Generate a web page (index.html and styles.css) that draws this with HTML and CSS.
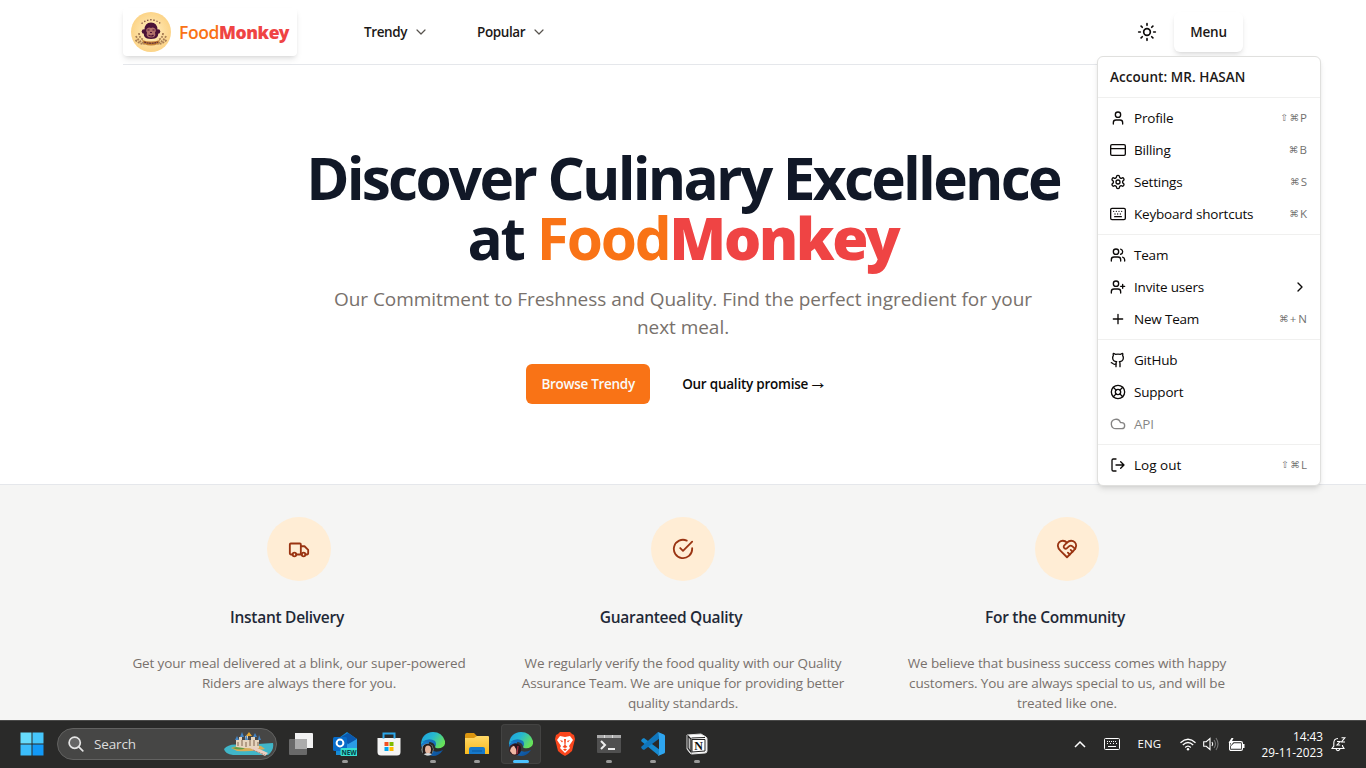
FILE: index.html
```html
<!DOCTYPE html>
<html lang="en">
<head>
<meta charset="utf-8">
<title>FoodMonkey</title>
<link rel="stylesheet" href="styles.css">
</head>
<body>
<main class="page">
  <div class="hero-wrap">
    <header class="header">
      <a class="brand">
        <svg class="brand-logo" viewBox="0 0 40 40">
          <defs><radialGradient id="cream"><stop offset="0" stop-color="#fff0c4"/><stop offset="1" stop-color="#fcd488"/></radialGradient></defs>
          <circle cx="20" cy="20" r="20" fill="url(#cream)"/>
          <path d="M10.500 11.500q9.500-7.500 19 0" fill="none" stroke="#7a4a3c" stroke-width="1.300" stroke-dasharray="1.300 1.900"/>
          <path d="M5 24q2 5 8 7M8 21q0 5 5 7M35 24q-2 5-8 7M32 21q0 5-5 7M4.500 28q4 4 9 4M35.500 28q-4 4-9 4" fill="none" stroke="#a97f55" stroke-width="1.800" stroke-dasharray="2 1"/>
          <circle cx="13" cy="19.500" r="2.300" fill="#4a1237"/><circle cx="27" cy="19.500" r="2.300" fill="#4a1237"/>
          <path d="M13.500 18q0-7.500 6.500-7.500t6.500 7.500q3 9-6.500 9t-6.500-9z" fill="#4a1237"/>
          <path d="M15.500 17q2-2.500 4.500-1 2.500-1.500 4.500 1 1 2.500-.5 3.500 1.500 5-4 5t-4-5q-1.500-1-.5-3.500z" fill="#b0706a"/>
          <path d="M16.500 18h2M21.500 18h2M19 20.500h2M17.500 23q3 2 5 0" stroke="#4a1237" stroke-width="1.200" fill="none"/>
          <path d="M11 28q9 3 18 0l-2 4q-7 3-14 0z" fill="#c48236"/>
          <path d="M13 30q7 2.500 14 0" stroke="#5a2639" stroke-width="1.200" fill="none" stroke-dasharray="2 .6"/>
        </svg>
        <span class="brand-name"><span class="food">Food</span><span class="monkey">Monkey</span></span>
      </a>
      <nav class="nav">
        <a class="nav-item"><span>Trendy</span><svg class="icon chevron" viewBox="0 0 24 24"><path d="m6 9 6 6 6-6"/></svg></a>
        <a class="nav-item"><span>Popular</span><svg class="icon chevron" viewBox="0 0 24 24"><path d="m6 9 6 6 6-6"/></svg></a>
      </nav>
      <div class="header-actions">
        <svg class="icon sun" viewBox="0 0 24 24"><circle cx="12" cy="12" r="4"/><path d="M12 2v2M12 20v2M4.930 4.930l1.410 1.410M17.660 17.660l1.410 1.410M2 12h2M20 12h2M6.340 17.660l-1.410 1.410M19.070 4.930l-1.410 1.410"/></svg>
        <button class="menu-button">Menu</button>
      </div>
      <div class="dropdown">
        <div class="menu-label">Account: MR. HASAN</div>
        <hr class="menu-sep">
        <div class="menu-item"><svg class="icon" viewBox="0 0 24 24"><path d="M19 21v-2a4 4 0 0 0-4-4H9a4 4 0 0 0-4 4v2"/><circle cx="12" cy="7" r="4"/></svg><span>Profile</span><span class="keys"><i class="shift">⇧</i><i>⌘</i>P</span></div>
        <div class="menu-item"><svg class="icon" viewBox="0 0 24 24"><rect width="22" height="16" x="1" y="4" rx="2"/><path d="M1 10h22"/></svg><span>Billing</span><span class="keys"><i>⌘</i>B</span></div>
        <div class="menu-item"><svg class="icon" viewBox="0 0 24 24"><path d="M12.220 2h-.44a2 2 0 0 0-2 2v.18a2 2 0 0 1-1 1.730l-.43.25a2 2 0 0 1-2 0l-.15-.08a2 2 0 0 0-2.730.73l-.22.38a2 2 0 0 0 .73 2.730l.15.1a2 2 0 0 1 1 1.720v.51a2 2 0 0 1-1 1.740l-.15.09a2 2 0 0 0-.73 2.730l.22.38a2 2 0 0 0 2.730.73l.15-.08a2 2 0 0 1 2 0l.43.25a2 2 0 0 1 1 1.730V20a2 2 0 0 0 2 2h.44a2 2 0 0 0 2-2v-.18a2 2 0 0 1 1-1.730l.43-.25a2 2 0 0 1 2 0l.15.08a2 2 0 0 0 2.730-.73l.22-.39a2 2 0 0 0-.73-2.730l-.15-.08a2 2 0 0 1-1-1.740v-.5a2 2 0 0 1 1-1.740l.15-.09a2 2 0 0 0 .73-2.730l-.22-.38a2 2 0 0 0-2.730-.73l-.15.08a2 2 0 0 1-2 0l-.43-.25a2 2 0 0 1-1-1.730V4a2 2 0 0 0-2-2z"/><circle cx="12" cy="12" r="3"/></svg><span>Settings</span><span class="keys"><i>⌘</i>S</span></div>
        <div class="menu-item"><svg class="icon" viewBox="0 0 24 24"><rect width="22" height="17" x="1" y="3.500" rx="2"/><path d="M5.500 8h.01M9.500 8h.01M13.500 8h.01M17.500 8h.01M7.500 12h.01M11.500 12h.01M15.500 12h.01M7 16h10"/></svg><span>Keyboard shortcuts</span><span class="keys"><i>⌘</i>K</span></div>
        <hr class="menu-sep">
        <div class="menu-item"><svg class="icon" viewBox="0 0 24 24"><path d="M16 21v-2a4 4 0 0 0-4-4H6a4 4 0 0 0-4 4v2"/><circle cx="9" cy="7" r="4"/><path d="M22 21v-2a4 4 0 0 0-3-3.870M16 3.130a4 4 0 0 1 0 7.750"/></svg><span>Team</span></div>
        <div class="menu-item"><svg class="icon" viewBox="0 0 24 24"><path d="M16 21v-2a4 4 0 0 0-4-4H6a4 4 0 0 0-4 4v2"/><circle cx="9" cy="7" r="4"/><path d="M19 8v6M22 11h-6"/></svg><span>Invite users</span><svg class="icon submenu" viewBox="0 0 24 24"><path d="m9 18 6-6-6-6"/></svg></div>
        <div class="menu-item"><svg class="icon" viewBox="0 0 24 24"><path d="M5 12h14M12 5v14"/></svg><span>New Team</span><span class="keys wide"><i>⌘</i>+N</span></div>
        <hr class="menu-sep">
        <div class="menu-item"><svg class="icon" viewBox="0 0 24 24"><path d="M15 22v-4a4.800 4.800 0 0 0-1-3.500c3 0 6-2 6-5.500.08-1.250-.27-2.480-1-3.500.28-1.150.28-2.350 0-3.500 0 0-1 0-3 1.500-2.640-.5-5.360-.5-8 0C6 2 5 2 5 2c-.3 1.150-.3 2.350 0 3.500A5.403 5.403 0 0 0 4 9c0 3.500 3 5.500 6 5.500-.39.49-.68 1.050-.85 1.650-.17.6-.22 1.230-.15 1.850v4"/><path d="M9 18c-4.510 2-5-2-7-2"/></svg><span>GitHub</span></div>
        <div class="menu-item"><svg class="icon" viewBox="0 0 24 24"><circle cx="12" cy="12" r="10"/><path d="m4.930 4.930 4.240 4.240M14.830 9.170l4.240-4.240M14.830 14.830l4.240 4.240M9.170 14.830l-4.240 4.240"/><circle cx="12" cy="12" r="4"/></svg><span>Support</span></div>
        <div class="menu-item disabled"><svg class="icon" viewBox="0 0 24 24"><path d="M17.500 19H9a7 7 0 1 1 6.710-9h1.790a4.500 4.500 0 1 1 0 9Z"/></svg><span>API</span></div>
        <hr class="menu-sep">
        <div class="menu-item"><svg class="icon" viewBox="0 0 24 24"><path d="M9 21H5a2 2 0 0 1-2-2V5a2 2 0 0 1 2-2h4M16 17l5-5-5-5M21 12H9"/></svg><span class="logout">Log out</span><span class="keys"><i class="shift">⇧</i><i>⌘</i>L</span></div>
      </div>
    </header>
    <section class="hero">
      <h1><span class="line-one">Discover Culinary Excellence</span><br>at <span class="food">Food</span><span class="monkey">Monkey</span></h1>
      <p>Our Commitment to Freshness and Quality. Find the perfect ingredient for your<br>next meal.</p>
      <div class="cta">
        <a class="btn primary">Browse Trendy</a>
        <a class="btn ghost">Our quality promise <span class="arrow">→</span></a>
      </div>
    </section>
  </div>
  <section class="perks">
    <div class="perk-grid">
      <article class="perk">
        <div class="perk-icon"><svg class="icon" viewBox="0 0 24 24"><path d="M5 18H3c-.6 0-1-.4-1-1V7c0-.6.4-1 1-1h10c.6 0 1 .4 1 1v11M14 9h4l4 4v4c0 .6-.4 1-1 1h-2M15 18H9"/><circle cx="7" cy="18" r="2"/><circle cx="17" cy="18" r="2"/></svg></div>
        <h3>Instant Delivery</h3>
        <p>Get your meal delivered at a blink, our super-powered<br>Riders are always there for you.</p>
      </article>
      <article class="perk">
        <div class="perk-icon"><svg class="icon" viewBox="0 0 24 24"><path d="M22 11.080V12a10 10 0 1 1-5.930-9.140"/><path d="m9 11 3 3L22 4"/></svg></div>
        <h3>Guaranteed Quality</h3>
        <p>We regularly verify the food quality with our Quality<br>Assurance Team. We are unique for providing better<br>quality standards.</p>
      </article>
      <article class="perk">
        <div class="perk-icon"><svg class="icon" viewBox="0 0 24 24"><path d="M19 14c1.490-1.460 3-3.210 3-5.500A5.500 5.500 0 0 0 16.500 3c-1.760 0-3 .5-4.500 2-1.500-1.500-2.740-2-4.500-2A5.500 5.500 0 0 0 2 8.500c0 2.300 1.500 4.050 3 5.500l7 7Z"/><path d="M12 5 9.040 7.960a2.170 2.170 0 0 0 0 3.080c.82.82 2.130.85 3 .07l2.070-1.900a2.820 2.820 0 0 1 3.790 0l2.960 2.660M18 15l-2-2M15 18l-2-2"/></svg></div>
        <h3>For the Community</h3>
        <p>We believe that business success comes with happy<br>customers. You are always special to us, and will be<br>treated like one.</p>
      </article>
    </div>
  </section>
</main>

<footer class="taskbar">
  <svg width="0" height="0" class="defs">
    <defs>
      <linearGradient id="edgeTop" x1="0" y1="0" x2="1" y2=".5"><stop offset="0" stop-color="#1b9de2"/><stop offset=".5" stop-color="#27b9cf"/><stop offset="1" stop-color="#66e05a"/></linearGradient>
      <linearGradient id="edgeLow" x1="0" y1="0" x2="1" y2="1"><stop offset="0" stop-color="#1a86d8"/><stop offset="1" stop-color="#0c4a92"/></linearGradient>
      <linearGradient id="folder" x1="0" y1="0" x2="0" y2="1"><stop offset="0" stop-color="#ffd968"/><stop offset="1" stop-color="#f9b91c"/></linearGradient>
      <symbol id="edge" viewBox="0 0 24 24">
        <path d="M0 13C0 5 5 0 12 0q9 0 12 9c1 6-4 8-9 7-2-1 0-2-1-5Q12 8 8 9 2 10 0 13z" fill="url(#edgeTop)"/>
        <path d="M0 13q4-6 9-4-3 4 0 8 5 5 13 1-4 6-10 6Q2 24 0 13z" fill="url(#edgeLow)"/>
        <path d="M1 10q7-5 13-1 2 3 0 6 0-4-5-5-4-1-8 0z" fill="#1672bd"/>
      </symbol>
    </defs>
  </svg>
  <div class="task"><svg width="24" height="24" viewBox="0 0 24 24"><path d="M.5.500h11v11H.5z" fill="#67dcfc"/><path d="M12.500.500h11v11h-11z" fill="#46c6fb"/><path d="M.5 12.500h11v11H.5z" fill="#3bbdfb"/><path d="M12.500 12.500h11v11h-11z" fill="#1299f7"/></svg></div>
  <div class="search">
    <svg width="16" height="16" viewBox="0 0 16 16" fill="none" stroke="#e5e5e5" stroke-width="1.700"><circle cx="6.700" cy="6.700" r="5.600" fill="#666"/><path d="m10.800 10.800 4 4" stroke-linecap="round"/></svg>
    <span>Search</span>
    <svg class="castle" width="50" height="26" viewBox="0 0 50 26">
      <path d="M0 18Q5 12 16 14l33-2c1 5-1 9-5 12H9Q1 23 0 18z" fill="#40b6c8"/>
      <path d="M7 17q10-4 30-2l4 3q-12 3-28 2z" fill="#d7ad57"/>
      <path d="M8 17q10-3 13 0-4 3-13 0z" fill="#5f9c46"/>
      <path d="M12 16V9h3V6h3v3h3V5h3v4h3V6h4v3h4v8q-12 1-23-1z" fill="#e6d5be"/>
      <path d="m11 9 2-4 2 4zM16 6l2-5 2 5zM21 9l1-6 2 6zM29 6l2-4 2 4zM34 9l1-5 2 5z" fill="#4385c5"/>
      <path d="m22 5 3-4 3 4z" fill="#e8a62c"/>
      <path d="M14 11v4M18 9v6M22 11v5M26 9v6M30 9v6M34 11v4" stroke="#80654f"/>
      <path d="m26 17 5-1 13 6-3 3z" fill="#e9cfc3"/><path d="m29 19 12 5" stroke="#a98477" stroke-dasharray="2 1"/>
    </svg>
  </div>
  <div class="task"><svg width="24" height="24" viewBox="0 0 24 24"><path d="M6 1h17a1 1 0 0 1 1 1v14H6z" fill="#f1f1f1"/><rect y="7" width="18" height="16" rx="1" fill="#696969"/><path d="M6 7h12v10H6z" fill="#ababab"/></svg></div>
  <div class="task running"><svg width="24" height="24" viewBox="0 0 24 24"><path d="M3 8 14 0l10 7v16H3z" fill="#168bd6"/><path d="m8 5 7-4 9 6-8 6z" fill="#0b58ae"/><path d="M10 15 24 7v13H10z" fill="#2a9ce6"/><rect y="5" width="14" height="14" rx="1.500" fill="#086cc9"/><circle cx="7" cy="11" r="3.400" fill="none" stroke="#fff" stroke-width="2"/><rect x="7.500" y="16" width="17" height="8" rx="1" fill="#35e0d0"/><text x="16" y="22.500" text-anchor="middle" class="new-tag">NEW</text></svg></div>
  <div class="task"><svg width="24" height="24" viewBox="0 0 24 24"><path d="M.500 6h23v14a3.500 3.500 0 0 1-3.500 3.500H4A3.500 3.500 0 0 1 .500 20z" fill="#f4f4f4"/><path d="M6.500 6.500v-5h11v5" fill="none" stroke="#2ca6e8" stroke-width="2"/><path d="M7.500 10h4v4h-4z" fill="#f25022"/><path d="M12.500 10h4v4h-4z" fill="#7fba00"/><path d="M7.500 15h4v4h-4z" fill="#00a4ef"/><path d="M12.500 15h4v4h-4z" fill="#ffb900"/></svg></div>
  <div class="task running"><svg width="24" height="24" viewBox="0 0 24 24"><use href="#edge"/><circle cx="6.500" cy="17.500" r="6" fill="#9eb2ae"/><path d="M2 22q-2-9 3-10 6-1 7 5l-1 5z" fill="#241b1b"/><ellipse cx="7" cy="17.500" rx="3" ry="4" fill="#e5b69e"/><path d="M3 22q4-2 8 0-4 3-8 0z" fill="#ddd"/></svg></div>
  <div class="task running"><svg width="24" height="24" viewBox="0 0 24 24"><path d="M0 3q0-2 2-2h7l3 3h11v10H0z" fill="#db950f"/><path d="M0 6h9l3-2h11q1 0 1 1v17H0z" fill="url(#folder)"/><path d="M4 22v-5q0-2 2-2h12q2 0 2 2v5z" fill="#1679cb"/><path d="M7 19h10" stroke="#0b5a9f"/></svg></div>
  <div class="task active"><svg width="24" height="24" viewBox="0 0 24 24"><use href="#edge"/><circle cx="6" cy="17.500" r="6" fill="#3a2023"/><path d="M1 19q1-6 7-5 1 4-1 8-3 2-6-3z" fill="#efb7a4"/><path d="m4 12 3 5 1 6q5-3 4-8-3-5-8-3z" fill="#29131c"/><path d="m9 14-1 8" stroke="#a92e42" stroke-width="1.200"/></svg></div>
  <div class="task"><svg width="20" height="24" viewBox="0 0 20 24"><path d="m5 0h10l2 2 2 1 1 4-3 12q-3 3-7 5-4-2-7-5L0 7l1-4 2-1z" fill="#f9461d"/><path d="m5 4 5 1 5-1 3 4-4 6 1 2-5 5-5-5 1-2-4-6z" fill="#fff"/><path d="m5 8 3 1-1 1.500zM15 8l-3 1 1 1.500zM9 7h2l-.5 6 2 2-2.500 1-2.500-1 2-2zM8 17.500l2-1 2 1-2 1.500z" fill="#f9461d"/></svg></div>
  <div class="task running"><svg width="24" height="20" viewBox="0 0 24 20"><rect y="1" width="24" height="18" rx="1" fill="#505050"/><path d="M0 1h24v3H0z" fill="#aaa"/><path d="M7 1h1v3H7zM15 1h1v3h-1z" fill="#ddd"/><path d="m4 7 4 4-4 4M11 15h7" fill="none" stroke="#eee" stroke-width="2"/></svg></div>
  <div class="task running"><svg width="24" height="24" viewBox="0 0 24 24"><path d="m1 7 2-1 16 12-2 5L0 9z" fill="#168ad0"/><path d="m0 15 17-15 2 6L3 18l-2-1z" fill="#1076bc"/><path d="m17 0 6 2.500q1 .5 1 1.500v16q0 1-1 1.500L17 24l1-5V5z" fill="#2ea5ef"/></svg></div>
  <div class="task running"><svg width="22" height="22" viewBox="0 0 22 22"><path d="m1 2 14-1 5 3q1 .5 1 2v12q0 2-2 2L6 21q-1 0-2-1l-3-4z" fill="#fff" stroke="#ddd"/><path d="m2 3 3 3v13l-3-4zM5.500 5 19 4.500" fill="#bbb" stroke="#222" stroke-width="1.200"/><path d="M6 6.500h13v11.500L6 19z" fill="#fff" stroke="#222"/><text x="12.500" y="16.500" text-anchor="middle" class="notion-letter">N</text></svg></div>
  <div class="tray">
    <svg class="up" width="12" height="8" viewBox="0 0 12 8"><path d="m1 7 5-5 5 5" fill="none" stroke="#fff" stroke-width="1.500"/></svg>
    <svg class="kb" width="16" height="12" viewBox="0 0 16 12" fill="none" stroke="#fff"><rect x=".5" y=".5" width="15" height="11" rx="1"/><path d="M3 3.500h10" stroke-dasharray="1 1"/><path d="M3 5.500h10" stroke-dasharray="1 2"/><path d="M4 8.500h8"/></svg>
    <span class="lang">ENG</span>
    <svg class="wifi" width="16" height="13" viewBox="0 0 16 13" fill="none" stroke="#fff" stroke-width="1.300"><path d="M.5 4.700q7.500-7 15 0M2.800 7q5.200-5 10.400 0M5.200 9.500q2.800-2.700 5.600 0"/><circle cx="8" cy="11.200" r="1.200" fill="#fff" stroke="none"/></svg>
    <svg class="vol" width="16" height="14" viewBox="0 0 16 14" fill="none" stroke="#fff" stroke-width="1.100"><path d="M.7 4.700h2.500L7 1.500v11L3.200 9.300H.7z"/><path d="M9 5q1.500 2 0 4"/><path d="M11 3q3 4 0 8M13 1q4 6 0 12" stroke="#777"/></svg>
    <svg class="battery" width="17" height="13" viewBox="0 0 17 13"><rect x="1.600" y="3.600" width="12.800" height="8.800" rx="1.500" fill="none" stroke="#fff" stroke-width="1.200"/><path d="M6 5.200h7v5.600H3V8zM15 6h1.500v4H15z" fill="#fff"/><path d="m3.500 0-3 5H3L2 8.500 6 3.500H3.800L5.500 0z" fill="#fff"/></svg>
    <div class="clock"><span>14:43</span><span class="date">29-11-2023</span></div>
    <svg class="bell" width="15" height="15" viewBox="0 0 15 15" fill="none" stroke="#fff" stroke-width="1.100"><path d="M7 1.500Q2.800 1.700 2.800 6v3L1 11.500h12L11.500 9V8M5 12q1.800 3.500 4 0M6 4.500h3L6 8h3.200M10.500.700H14L10.500 5H14"/></svg>
  </div>
</footer>
</body>
</html>
```
FILE: styles.css
```css
* { box-sizing: border-box; }
body {
  margin: 0;
  width: 1366px;
  height: 768px;
  overflow: hidden;
  display: flex;
  flex-direction: column;
  font-family: "Open Sans", "Noto Sans", sans-serif;
  font-size: 13.5px;
  line-height: 20px;
  color: #0c0a09;
  background: #fff;
}
h1, h3, p, hr { margin: 0; }
i { font-style: normal; }
.page { height: 720px; overflow: hidden; }
.icon {
  width: 16px;
  height: 16px;
  flex: none;
  fill: none;
  stroke: currentColor;
  stroke-width: 2;
  stroke-linecap: round;
  stroke-linejoin: round;
}
.hero-wrap { height: 484px; }
.header {
  position: relative;
  width: 1120px;
  height: 65px;
  margin: 0 auto;
  border-bottom: 1px solid #e5e7eb;
  display: flex;
  align-items: center;
}
.brand {
  width: 174px;
  height: 48px;
  padding: 4px 8px;
  border-radius: 4px;
  box-shadow: 0 4px 6px -1px #0000001a, 0 2px 4px -2px #0000001a;
  display: flex;
  align-items: center;
  gap: 8px;
}
.brand-logo { width: 40px; height: 40px; flex: none; }
.brand-name { font-size: 17.5px; line-height: 28px; font-weight: 600; white-space: nowrap; letter-spacing: -.4px; }
.food { color: #f97316; }
.monkey { color: #ef4444; font-family: "Noto Sans", "Open Sans", sans-serif; font-weight: 900; }
.nav { display: flex; margin-left: 67px; gap: 48px; font-weight: 600; letter-spacing: -.4px; color: #1c1917; }
.nav-item { display: flex; align-items: center; gap: 6px; }
.chevron { color: #57534e; stroke-width: 1.8; }
.header-actions { margin-left: auto; display: flex; align-items: center; gap: 17px; }
.sun { width: 20px; height: 20px; }
.menu-button {
  width: 69px;
  height: 40px;
  border: 0;
  border-radius: 6px;
  background: #fff;
  font: 600 13.5px/20px "Open Sans", sans-serif;
  letter-spacing: -.2px;
  color: #1c1917;
  box-shadow: 0 4px 6px -1px #0000001a, 0 2px 4px -2px #0000001a;
}
.dropdown {
  position: absolute;
  top: 56px;
  left: 974px;
  width: 224px;
  padding: 4px;
  border: 1px solid #e0e0de;
  border-radius: 6px;
  background: #fff;
  box-shadow: 0 4px 6px -1px #0000001a, 0 2px 4px -2px #0000001a;
  z-index: 2;
}
.menu-label { padding: 6px 8px; font-weight: 600; color: #1c1917; letter-spacing: .05px; }
.menu-sep { height: 1px; margin: 4px -4px; border: 0; background: #f0f0ef; }
.menu-item { height: 32px; padding: 6px 8px; display: flex; align-items: center; gap: 8px; letter-spacing: -.2px; }
.logout { letter-spacing: 0; }
.disabled { opacity: .5; }
.submenu { margin-left: auto; }
.keys { margin-left: auto; font-size: 11.500px; letter-spacing: 1px; opacity: .6; display: flex; align-items: center; }
.wide { letter-spacing: 2px; margin-right: -1px; }
.keys i { font: 9.500px/20px "DejaVu Sans", sans-serif; letter-spacing: 1.2px; }
.hero { text-align: center; padding-top: 82px; }
.hero h1 { font-size: 58.5px; line-height: 60px; font-weight: 700; letter-spacing: -2.2px; color: #111827; }
.line-one { letter-spacing: -2.76px; }
.hero p { margin-top: 18px; font-size: 19px; line-height: 28px; letter-spacing: -.04px; color: #78716c; }
.cta { display: flex; justify-content: center; gap: 16px; margin-top: 23px; }
.btn { height: 40px; padding: 10px 16px; border-radius: 6px; font-weight: 600; white-space: nowrap; letter-spacing: -.23px; }
.primary { width: 124px; padding: 10px 0; background: #f97316; color: #fafaf9; letter-spacing: -.3px; }
.arrow { font-family: "Noto Sans Math", "Liberation Sans", sans-serif; font-size: 12.5px; font-weight: 400; }
.perks { height: 236px; border-top: 1px solid #e5e7eb; background: #f5f5f4; padding-top: 32px; }
.perk-grid { width: 1120px; margin: 0 auto; display: grid; grid-template-columns: repeat(3, 352px); gap: 32px; }
.perk { text-align: center; display: flex; flex-direction: column; align-items: center; }
.perk-icon { width: 64px; height: 64px; border-radius: 50%; background: #ffedd5; color: #9a3412; display: grid; place-items: center; }
.perk-icon .icon { width: 22px; height: 22px; }
.perk h3 { margin: 24px 24px 0 0; font-size: 15.500px; line-height: 24px; font-weight: 600; letter-spacing: -.28px; color: #1f2937; }
.perk p { margin-top: 24px; color: #78716c; white-space: nowrap; letter-spacing: -.13px; }
.taskbar { height: 48px; flex: none; background: #2a2a29; box-shadow: inset 0 1px #4a4a49; display: flex; align-items: center; padding-left: 10px; color: #fff; }
.defs { position: absolute; }
.task { position: relative; width: 40px; height: 40px; margin: 0 2px; display: grid; place-items: center; border-radius: 4px; flex: none; }
.running::after, .active::after { content: ""; position: absolute; bottom: 1px; left: 17px; width: 6px; height: 3px; border-radius: 2px; background: #999; }
.active { background: #383837; box-shadow: inset 0 0 0 1px #434342; }
.active::after { left: 12px; width: 16px; background: #4cc2ff; }
.search { width: 220px; height: 32px; margin: 0 2px 0 3px; padding: 0 2px 0 10px; border: 1px solid #626261; border-radius: 16px; background: #464645; display: flex; align-items: center; gap: 10px; font-size: 13.500px; letter-spacing: -.15px; color: #ddd; }
.castle { margin-left: auto; }
.new-tag { font: 700 6.500px "Open Sans", sans-serif; letter-spacing: 0; fill: #063e46; }
.notion-letter { font: 700 12px "Liberation Serif", serif; fill: #111; }
.tray { margin-left: auto; padding-right: 20px; display: flex; align-items: center; font-size: 11.800px; line-height: 16px; }
.kb { margin-left: 18px; }
.lang { margin-left: 18px; font-size: 11.500px; }
.wifi { margin-left: 19px; }
.vol { margin-left: 7px; }
.battery { margin-left: 9px; }
.clock { width: 64px; margin-left: 14px; display: flex; flex-direction: column; align-items: flex-end; white-space: nowrap; }
.bell { margin-left: 8px; }
```
